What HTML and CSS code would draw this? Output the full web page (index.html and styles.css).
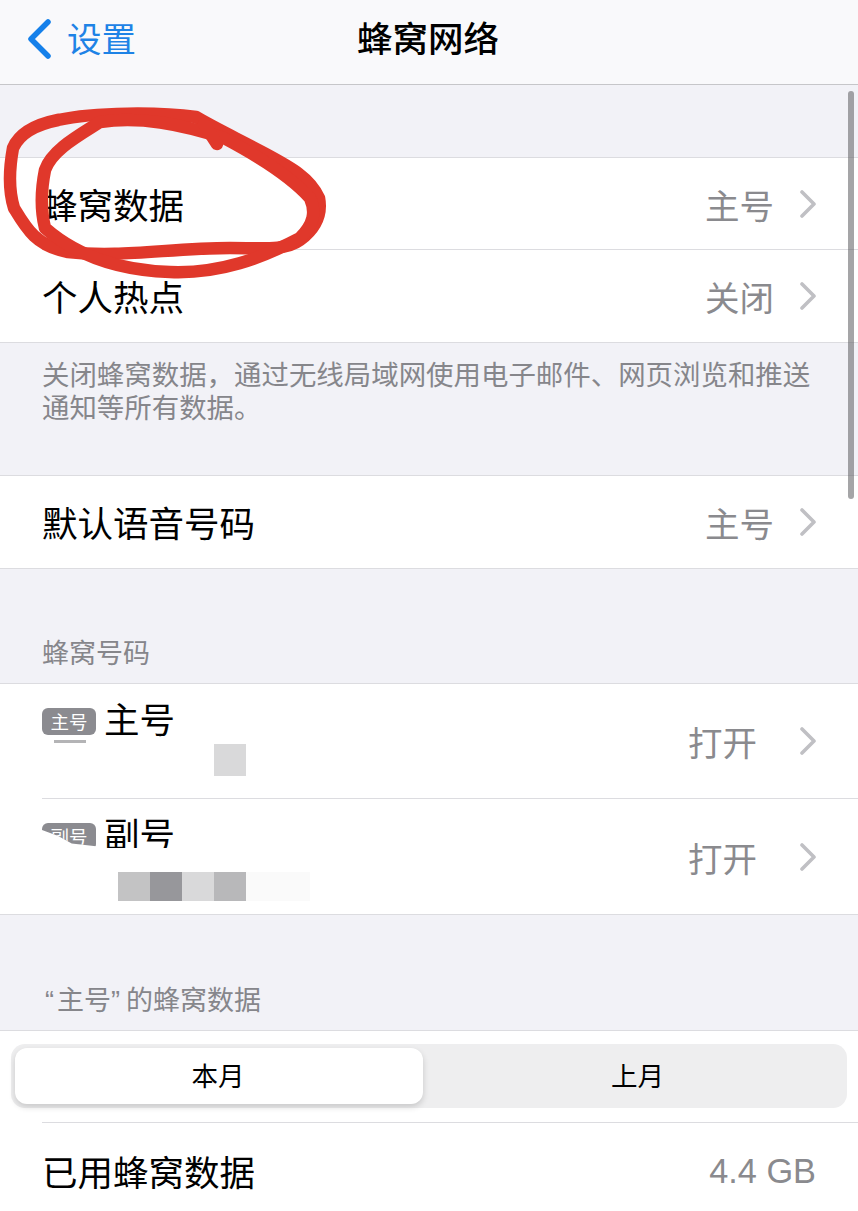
FILE: index.html
```html
<!DOCTYPE html>
<html lang="zh-CN">
<head>
<meta charset="utf-8">
<title>蜂窝网络</title>
<link rel="stylesheet" href="styles.css">
</head>
<body>
<div class="page">
  <header class="nav">
    <div class="back">
      <svg class="back-icon" width="26" height="40" viewBox="0 0 26 40"><path d="M22 3 L5 20 L22 37" fill="none" stroke="#1580ea" stroke-width="5.5" stroke-linecap="round" stroke-linejoin="round"/></svg>
      <span>设置</span>
    </div>
    <h1 class="title">蜂窝网络</h1>
  </header>

  <section class="group first">
    <div class="row"><span class="label">蜂窝数据</span><span class="value">主号</span><svg class="chev" width="16" height="28" viewBox="0 0 16 28"><path d="M2 2 L14 14 L2 26" fill="none" stroke="#c0c0c4" stroke-width="3.6" stroke-linecap="round" stroke-linejoin="round"/></svg></div>
    <div class="row last"><span class="label">个人热点</span><span class="value">关闭</span><svg class="chev" width="16" height="28" viewBox="0 0 16 28"><path d="M2 2 L14 14 L2 26" fill="none" stroke="#c0c0c4" stroke-width="3.6" stroke-linecap="round" stroke-linejoin="round"/></svg></div>
  </section>
  <p class="note">关闭蜂窝数据，通过无线局域网使用电子邮件、网页浏览和推送通知等所有数据。</p>

  <section class="group">
    <div class="row last"><span class="label">默认语音号码</span><span class="value">主号</span><svg class="chev" width="16" height="28" viewBox="0 0 16 28"><path d="M2 2 L14 14 L2 26" fill="none" stroke="#c0c0c4" stroke-width="3.6" stroke-linecap="round" stroke-linejoin="round"/></svg></div>
  </section>

  <h2 class="section-head sims-head">蜂窝号码</h2>
  <section class="group">
    <div class="row sim">
      <div class="sim-info">
        <div class="sim-name"><span class="badge">主号</span><span class="sim-title">主号</span></div>
        <div class="mosaic m-one"><span class="smudge"></span><i class="b1"></i></div>
      </div>
      <span class="value">打开</span><svg class="chev" width="16" height="28" viewBox="0 0 16 28"><path d="M2 2 L14 14 L2 26" fill="none" stroke="#c0c0c4" stroke-width="3.6" stroke-linecap="round" stroke-linejoin="round"/></svg>
    </div>
    <div class="row sim last">
      <div class="sim-info">
        <div class="sim-name"><span class="badge torn">副号</span><span class="sim-title cut">副号</span></div>
        <div class="mosaic m-two"><i class="b2"></i><i class="b3"></i><i class="b1"></i><i class="b4"></i><i class="b5"></i></div>
      </div>
      <span class="value">打开</span><svg class="chev" width="16" height="28" viewBox="0 0 16 28"><path d="M2 2 L14 14 L2 26" fill="none" stroke="#c0c0c4" stroke-width="3.6" stroke-linecap="round" stroke-linejoin="round"/></svg>
    </div>
  </section>

  <h2 class="section-head usage-head"><span class="quote open-quote">“</span>主号<span class="quote">”</span>的蜂窝数据</h2>
  <section class="group open">
    <div class="segment-wrap">
      <div class="segment">
        <div class="seg active">本月</div>
        <div class="seg second">上月</div>
      </div>
    </div>
    <div class="row usage"><span class="label">已用蜂窝数据</span><span class="value plain">4.4 GB</span></div>
  </section>

  <div class="scrollbar"></div>

  <svg class="scribble" width="340" height="180" viewBox="0 100 340 180">
    <g fill="none" stroke="#e0382b" stroke-width="12.5" stroke-linecap="round" stroke-linejoin="round">
      <path d="M58 120 C38 124 20 132 13 148 C9 170 9 192 14 208 C26 228 36 246 68 252 C120 258 170 248 230 248 C262 248 285 251 300 240 C316 228 322 214 319 198 C310 178 292 168 264 153 C240 140 218 130 196 117 C160 112 95 112 58 120"/>
      <path d="M100 122 C78 136 52 150 45 170 C41 190 41 212 45 228 C70 250 110 270 170 272 C220 274 262 258 300 238 C314 224 316 212 310 198 C292 178 258 156 224 138 C180 124 140 116 100 122"/>
      <path d="M204 124 L217 144"/>
    </g>
  </svg>
</div>
</body>
</html>
```
FILE: styles.css
```css
* { box-sizing: border-box; }
html, body { margin: 0; padding: 0; }
body {
  width: 858px;
  height: 1211px;
  overflow: hidden;
  background: #f2f2f7;
  font-family: "Noto Sans CJK SC", "Liberation Sans", sans-serif;
  color: #000;
}
.page { position: relative; width: 858px; height: 1211px; overflow: hidden; }

.nav {
  height: 85px;
  background: #f9f9fb;
  border-bottom: 1px solid #c6c6c9;
  display: grid;
  grid-template-columns: 1fr auto 1fr;
  align-items: center;
  padding-left: 26px;
  padding-bottom: 10px;
}
.back { display: flex; align-items: center; gap: 15px; color: #1e83e6; font-size: 34.5px; line-height: 40px; }
.back-icon { flex: none; margin-top: 3px; }
.title { grid-column: 2; margin: 0; font-size: 35.5px; line-height: 40px; font-weight: 500; transform: translateX(-14px); }

.group { background: #fff; border-top: 1px solid #dcdce0; border-bottom: 1px solid #dcdce0; }
.group.first { margin-top: 72px; }
.group.open { border-bottom: 0; }

.row {
  display: flex;
  align-items: center;
  height: 92px;
  margin-left: 42px;
  padding-right: 42px;
  border-bottom: 1px solid #dcdce0;
  font-size: 35.5px;
  line-height: 44px;
}
.row.last { border-bottom: 0; }
.label { flex: 1; }
.value { color: #8a8a8e; font-size: 34.5px; margin-right: 26px; }
.value.plain { margin-right: 0; font-family: "Liberation Sans", sans-serif; font-size: 34.3px; }
.chev { flex: none; }

.note {
  margin: 0;
  height: 132px;
  padding: 14px 42px 0;
  font-size: 27.45px;
  line-height: 33px;
  color: #86868b;
}

.section-head { margin: 0; padding: 0 42px; font-size: 27px; line-height: 32px; font-weight: 400; color: #86868b; }
.sims-head { padding-top: 67px; height: 114px; }
.usage-head { padding-top: 68px; height: 115px; }
.quote { font-family: "Liberation Sans", sans-serif; letter-spacing: 6px; }
.open-quote { margin-left: 3px; letter-spacing: 3px; }

.row.sim { height: 115px; }
.row.sim .value { margin-right: 43px; }
.sim-info { flex: 1; align-self: stretch; display: flex; flex-direction: column; }
.sim-name { display: flex; align-items: center; gap: 8px; height: 44px; margin-top: 12px; }
.badge {
  width: 54px; height: 27px;
  margin-top: 6px;
  background: #8b8b90;
  color: #fff;
  border-radius: 6px;
  font-size: 18.5px;
  line-height: 27px;
  text-align: center;
}
.badge.torn { clip-path: polygon(0 0, 100% 0, 100% 88%, 55% 78%, 30% 50%, 0 28%); }
.sim-title { font-size: 35.5px; line-height: 44px; }
.sim-title.cut { clip-path: inset(0 0 7px 0); }
.mosaic { position: relative; display: flex; height: 32px; }
.m-one { margin-left: 172px; margin-top: 4px; }
.m-two { margin-left: 76px; margin-top: 17px; height: 29px; }
.mosaic i { display: block; width: 32px; }
.smudge { position: absolute; left: -160px; top: -4px; width: 32px; height: 3px; background: #b4b4b6; }
.b1 { background: #d9d9da; }
.b2 { background: #c3c3c4; }
.b3 { background: #97979b; }
.b4 { background: #b8b8ba; }
.mosaic .b5 { width: 64px; background: #fafafa; }

.segment-wrap { padding: 13px 11px 14px; }
.segment {
  display: grid;
  grid-template-columns: 408px 1fr;
  height: 64px;
  padding: 4px 0 4px 4px;
  background: #eeeeef;
  border-radius: 14px;
}
.seg { display: flex; align-items: center; justify-content: center; font-size: 26.5px; padding-bottom: 4px; }
.seg.second { padding-left: 5px; }
.seg.active { background: #fff; border-radius: 12px; box-shadow: 0 3px 6px rgba(0,0,0,0.16); padding-right: 2px; }

.row.usage { height: 96px; border-top: 1px solid #dcdce0; border-bottom: 0; }

.scrollbar {
  position: absolute;
  right: 4px;
  top: 91px;
  width: 6px;
  height: 408px;
  border-radius: 3px;
  background: rgba(100,100,104,0.58);
}
.scribble { position: absolute; left: 0; top: 100px; }
```
